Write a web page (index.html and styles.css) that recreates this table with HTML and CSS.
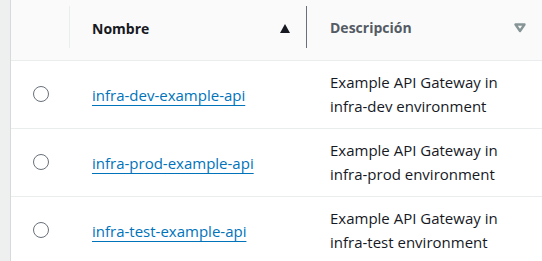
FILE: index.html
```html
<!DOCTYPE html>
<html lang="es">
<head>
  <meta charset="UTF-8">
  <title>APIs</title>
  <link rel="stylesheet" href="styles.css">
</head>
<body>
  <div class="page">
    <div class="rail"></div>
    <div class="table">
      <div class="row head">
        <div class="cell select"><span class="divider"></span></div>
        <div class="cell name">
          <span class="label dark">Nombre</span>
          <span class="sort-up"></span>
          <span class="divider strong"></span>
        </div>
        <div class="cell desc">
          <span class="label">Descripción</span>
          <svg class="sort-none" width="12" height="10" viewBox="0 0 12 10"><path d="M1.5 1.5h9L6 8z" fill="none" stroke="#879596" stroke-width="2.4" stroke-linejoin="round"/></svg>
        </div>
      </div>

      <div class="row">
        <div class="cell select"><span class="radio"></span></div>
        <div class="cell name"><a href="#">infra-dev-example-api</a></div>
        <div class="cell desc">Example API Gateway in<br>infra-dev environment</div>
      </div>
      <div class="row">
        <div class="cell select"><span class="radio"></span></div>
        <div class="cell name"><a href="#">infra-prod-example-api</a></div>
        <div class="cell desc">Example API Gateway in<br>infra-prod environment</div>
      </div>
      <div class="row">
        <div class="cell select"><span class="radio"></span></div>
        <div class="cell name"><a href="#">infra-test-example-api</a></div>
        <div class="cell desc">Example API Gateway in<br>infra-test environment</div>
      </div>
    </div>
  </div>
</body>
</html>
```

FILE: styles.css
```css
* {
  margin: 0;
  padding: 0;
  box-sizing: border-box;
}

body {
  font-family: "Open Sans", "Noto Sans", Arial, sans-serif;
  font-size: 15px;
  color: #16191f;
  background: white;
}

.page {
  display: flex;
  min-height: 100vh;
}

.rail {
  width: 11px;
  background: #eef0f0;
  border-right: 1px solid #d5dbdb;
}

.table {
  flex: 1;
}

.row {
  display: grid;
  grid-template-columns: 59px 237px 1fr;
  height: 68px;
  border-bottom: 1px solid #eaeded;
}

.row.head {
  height: 61px;
  background: #fafafa;
  font-size: 14px;
}

.head .cell {
  padding-bottom: 4px;
}

.cell {
  display: flex;
  align-items: center;
}

.cell.select {
  justify-content: center;
}

.head .cell.select {
  justify-content: flex-end;
}

.cell.name {
  padding-left: 22px;
}

.cell.desc {
  padding-left: 23px;
  padding-right: 16px;
  line-height: 24px;
  display: block;
  padding-top: 9px;
}

.head .cell.desc {
  display: flex;
  padding-top: 0;
}

.label {
  font-weight: 700;
  color: #545b64;
}

.label.dark {
  color: #16191f;
}

.divider {
  width: 1px;
  height: 42px;
  background: #eaeded;
  margin-top: -2px;
}

.divider.strong {
  background: #687078;
  margin-left: 16px;
}

.sort-up {
  margin-left: auto;
  width: 0;
  height: 0;
  border-left: 5.5px solid transparent;
  border-right: 5.5px solid transparent;
  border-bottom: 9px solid #16191f;
}

.sort-none {
  margin-left: auto;
  margin-right: 0;
}

.radio {
  width: 16px;
  height: 16px;
  border: 1.5px solid #687078;
  border-radius: 50%;
  margin-top: -2px;
}

a {
  color: #0073bb;
  text-decoration: underline;
  text-underline-offset: 4px;
  text-decoration-thickness: 1px;
}
```
